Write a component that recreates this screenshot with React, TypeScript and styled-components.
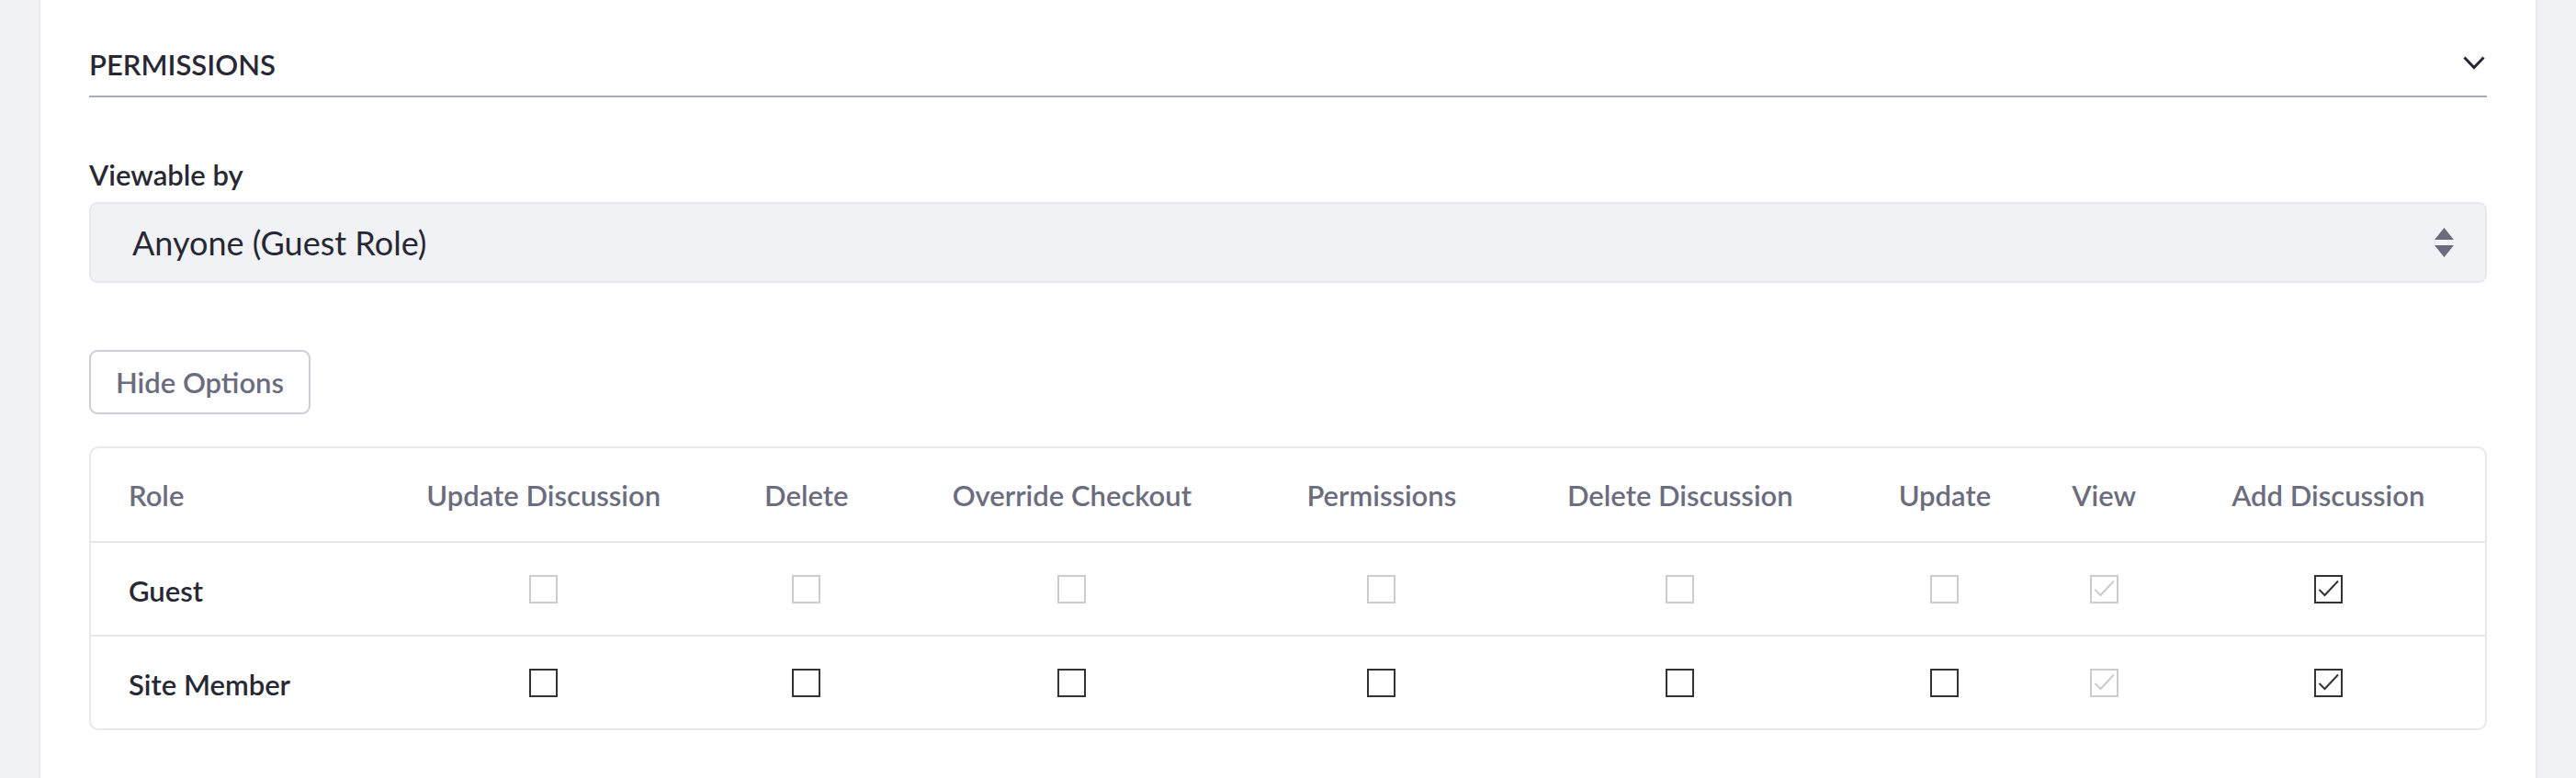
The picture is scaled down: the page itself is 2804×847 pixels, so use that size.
import React from 'react'
import styled, { createGlobalStyle } from 'styled-components'

const GlobalStyle = createGlobalStyle`
  html, body {
    margin: 0;
    padding: 0;
    background: #f1f2f5;
  }
  body {
    font-family: Lato, "Noto Sans", "Liberation Sans", sans-serif;
    color: #272833;
  }
`

const columns = [
  'Update Discussion',
  'Delete',
  'Override Checkout',
  'Permissions',
  'Delete Discussion',
  'Update',
  'View',
  'Add Discussion',
]

type Box = { checked?: boolean; disabled?: boolean }

const rows: { role: string; boxes: Box[] }[] = [
  {
    role: 'Guest',
    boxes: [
      { disabled: true },
      { disabled: true },
      { disabled: true },
      { disabled: true },
      { disabled: true },
      { disabled: true },
      { disabled: true, checked: true },
      { checked: true },
    ],
  },
  {
    role: 'Site Member',
    boxes: [{}, {}, {}, {}, {}, {}, { disabled: true, checked: true }, { checked: true }],
  },
]

const Page = styled.div`
  display: flex;
  min-height: 100vh;
`

const Panel = styled.div`
  margin-left: 42px;
  width: 2720px;
  box-sizing: border-box;
  background: #fff;
  border-left: 2px solid #e7e7ed;
  border-right: 2px solid #e7e7ed;
  padding: 47px 53px 0;
`

const SectionHeader = styled.div`
  display: flex;
  align-items: center;
  justify-content: space-between;
  padding-bottom: 11px;
  border-bottom: 2px solid #a7a9bc;
`

const SectionTitle = styled.div`
  font-size: 31px;
  line-height: 46px;
  font-weight: 600;
  text-transform: uppercase;
  color: #272833;
`

const Chevron = styled.svg`
  margin-right: 2px;
  margin-top: -4px;
`

const FieldLabel = styled.div`
  margin-top: 61px;
  font-size: 31px;
  line-height: 46px;
  font-weight: 600;
  color: #272833;
`

const SelectBox = styled.div`
  margin-top: 7px;
  height: 88px;
  box-sizing: border-box;
  display: flex;
  align-items: center;
  justify-content: space-between;
  padding: 0 34px 0 45px;
  background: #f1f2f5;
  border: 2px solid #e7e7ed;
  border-radius: 9px;
`

const SelectValue = styled.span`
  font-size: 36px;
  color: #272833;
`

const OptionsButton = styled.button`
  margin-top: 73px;
  height: 70px;
  box-sizing: border-box;
  padding: 0 27px;
  background: #fff;
  border: 2px solid #cdced9;
  border-radius: 9px;
  font-family: inherit;
  font-size: 31px;
  font-weight: 600;
  color: #6b6c7e;
`

const PermTable = styled.div`
  margin-top: 35px;
  border: 2px solid #e7e7ed;
  border-radius: 10px;
`

const TableRow = styled.div<{ $head?: boolean }>`
  display: grid;
  grid-template-columns: 296fr 395fr 178fr 401fr 274fr 377fr 200fr 147fr 342fr;
  align-items: center;
  height: ${({ $head }) => ($head ? '101px' : '100px')};
  & + & {
    border-top: 2px solid #e7e7ed;
  }
`

const HeadCell = styled.div<{ $left?: boolean }>`
  font-size: 31px;
  font-weight: 600;
  color: #6b6c7e;
  text-align: ${({ $left }) => ($left ? 'left' : 'center')};
  padding-left: ${({ $left }) => ($left ? '41px' : '0')};
  white-space: nowrap;
`

const RoleCell = styled.div`
  font-size: 31px;
  font-weight: 600;
  color: #272833;
  padding-left: 41px;
  padding-top: 4px;
`

const CheckCell = styled.div`
  display: flex;
  justify-content: center;
`

const Checkbox = styled.span<{ $disabled?: boolean }>`
  width: 31px;
  height: 31px;
  box-sizing: border-box;
  display: flex;
  align-items: center;
  justify-content: center;
  background: #fff;
  border: 2px solid ${({ $disabled }) => ($disabled ? '#cccccc' : '#333333')};
  color: ${({ $disabled }) => ($disabled ? '#cccccc' : '#333333')};
`

const CheckMark = () => (
  <svg width="27" height="27" viewBox="0 0 27 27">
    <polyline points="3.5,14 9.5,20 24,4.5" fill="none" stroke="currentColor" strokeWidth="2" />
  </svg>
)

export default function App() {
  return (
    <Page>
      <GlobalStyle />
      <Panel>
        <SectionHeader>
          <SectionTitle>Permissions</SectionTitle>
          <Chevron width="24" height="15" viewBox="0 0 24 15">
            <polyline points="1.5,1.5 12,12.5 22.5,1.5" fill="none" stroke="#272833" strokeWidth="3" />
          </Chevron>
        </SectionHeader>

        <FieldLabel>Viewable by</FieldLabel>
        <SelectBox>
          <SelectValue>Anyone (Guest Role)</SelectValue>
          <svg width="21" height="32" viewBox="0 0 21 32">
            <path d="M10.5 0 L21 13 H0 Z" fill="#6b6c7e" />
            <path d="M0 19 H21 L10.5 32 Z" fill="#6b6c7e" />
          </svg>
        </SelectBox>

        <OptionsButton>Hide Options</OptionsButton>

        <PermTable>
          <TableRow $head>
            <HeadCell $left>Role</HeadCell>
            {columns.map((c) => (
              <HeadCell key={c}>{c}</HeadCell>
            ))}
          </TableRow>
          {rows.map((r) => (
            <TableRow key={r.role}>
              <RoleCell>{r.role}</RoleCell>
              {r.boxes.map((b, i) => (
                <CheckCell key={i}>
                  <Checkbox $disabled={b.disabled}>{b.checked && <CheckMark />}</Checkbox>
                </CheckCell>
              ))}
            </TableRow>
          ))}
        </PermTable>
      </Panel>
    </Page>
  )
}
